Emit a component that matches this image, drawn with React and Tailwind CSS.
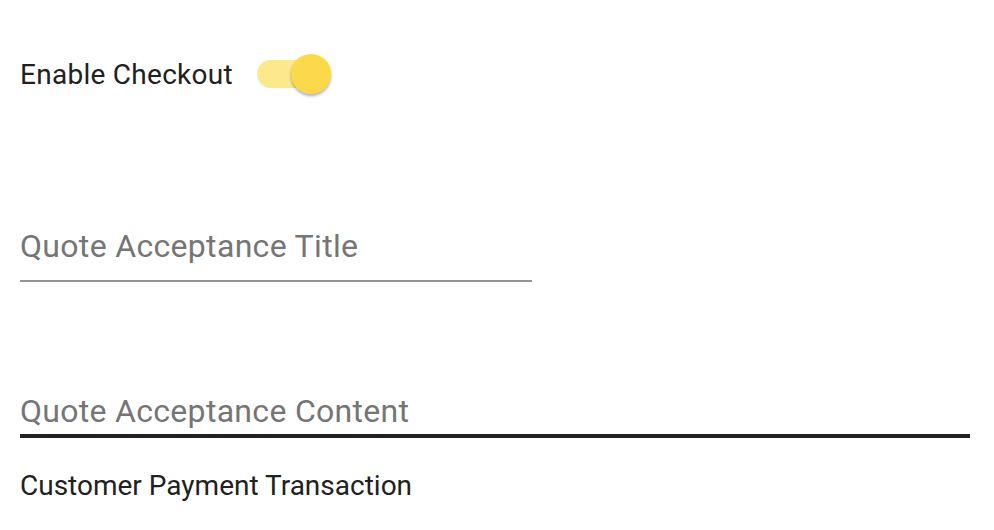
import { useState } from 'react'

function Toggle({ checked, onChange }) {
  return (
    <button
      type="button"
      onClick={() => onChange(!checked)}
      className="relative ml-6 w-[74px] h-10 shrink-0"
    >
      <span
        className={`absolute left-0 top-[6px] w-[68px] h-[28px] rounded-full ${
          checked ? 'bg-[#fce98c]' : 'bg-[#bdbdbd]'
        }`}
      />
      <span
        className={`absolute top-0 w-10 h-10 rounded-full shadow-[0_2px_3px_rgba(0,0,0,0.3)] ${
          checked ? 'left-[34px] bg-[#fcd94b]' : 'left-0 bg-[#fafafa]'
        }`}
      />
    </button>
  )
}

export default function App() {
  const [enabled, setEnabled] = useState(true)

  return (
    <div className="w-[994px] h-[530px] bg-white pl-5 pr-6 font-['Roboto',sans-serif] overflow-hidden">
      {/* Enable checkout */}
      <div className="pt-[54px] flex items-start h-[94px]">
        <span className="mt-[5px] text-[28px] leading-[32px] tracking-[0.27px] text-[#212121]">Enable Checkout</span>
        <Toggle checked={enabled} onChange={setEnabled} />
      </div>

      {/* Title field */}
      <div className="mt-[132px] w-[512px]">
        <div className="text-[32px] leading-[40px] tracking-[0.32px] text-[#757575]">Quote Acceptance Title</div>
        <div className="mt-[14px] h-[2px] bg-[#949494]" />
      </div>

      {/* Content field (focused) */}
      <div className="mt-[109px]">
        <div className="text-[32px] leading-[40px] tracking-[0.3px] text-[#757575]">Quote Acceptance Content</div>
        <div className="mt-[3px] h-1 bg-[#212121]" />
      </div>

      <div className="mt-[32px] text-[28px] leading-[32px] text-[#212121]">Customer Payment Transaction</div>
    </div>
  )
}
